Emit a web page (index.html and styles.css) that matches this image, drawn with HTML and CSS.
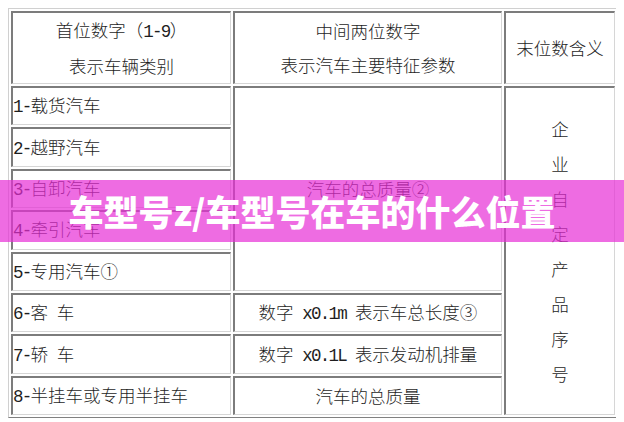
FILE: index.html
```html
<!DOCTYPE html>
<html lang="zh-CN">
<head>
<meta charset="utf-8">
<title>车型号</title>
<link rel="stylesheet" href="styles.css">
</head>
<body>
<table class="spec">
  <colgroup>
    <col class="w1"><col class="w2"><col class="w3">
  </colgroup>
  <tr class="head">
    <td>首位数字（<span class="m">1-9</span>）<br>表示车辆类别</td>
    <td>中间两位数字<br>表示汽车主要特征参数</td>
    <td>末位数含义</td>
  </tr>
  <tr class="r">
    <td class="type"><span class="m">1-</span>载货汽车</td>
    <td rowspan="5">汽车的总质量②</td>
    <td rowspan="8" class="vert">企<br>业<br>自<br>定<br>产<br>品<br>序<br>号</td>
  </tr>
  <tr class="r"><td class="type"><span class="m">2-</span>越野汽车</td></tr>
  <tr class="r"><td class="type"><span class="m">3-</span>自卸汽车</td></tr>
  <tr class="r"><td class="type"><span class="m">4-</span>牵引汽车</td></tr>
  <tr class="r"><td class="type"><span class="m">5-</span>专用汽车①</td></tr>
  <tr class="r">
    <td class="type"><span class="m">6-</span>客<span class="m"> </span>车</td>
    <td>数字<span class="m"> x0.1m </span>表示车总长度③</td>
  </tr>
  <tr class="r">
    <td class="type"><span class="m">7-</span>轿<span class="m"> </span>车</td>
    <td>数字<span class="m"> x0.1L </span>表示发动机排量</td>
  </tr>
  <tr class="r">
    <td class="type"><span class="m">8-</span>半挂车或专用半挂车</td>
    <td>汽车的总质量</td>
  </tr>
</table>
<div class="banner">车型号z/车型号在车的什么位置</div>
</body>
</html>
```
FILE: styles.css
```css
body {
  margin: 8px;
  background: #ffffff;
  color: #1e1e1e;
  font-family: "Noto Sans CJK SC", sans-serif;
}

.spec {
  border-collapse: separate;
  border-spacing: 2px;
  table-layout: fixed;
  width: 610px;
  border: 1px solid;
  border-color: #d0d0d0 #808080 #808080 #d0d0d0;
  font-size: 17.5px;
  font-weight: 300;
}

.w1 { width: 220px; }
.w2 { width: 269px; }
.w3 { width: 111px; }

.spec td {
  padding: 0;
  border-style: solid;
  border-width: 2px 1px 1px 2px;
  border-color: #7c7c7c #d6d6d6 #d6d6d6 #7c7c7c;
  vertical-align: middle;
  text-align: center;
  line-height: 24px;
  white-space: nowrap;
}

.head { height: 73px; }
.head td { line-height: 34px; }

.r { height: 39.4px; }

.spec td.type {
  text-align: left;
}

.spec td.vert {
  line-height: 35px;
}

.m {
  font-family: "Liberation Mono", monospace;
  font-weight: 400;
  letter-spacing: -1.75px;
}

.banner {
  position: absolute;
  left: 0;
  top: 180px;
  width: 624px;
  height: 62px;
  background: rgba(231, 45, 213, 0.7);
  color: #ffffff;
  font-family: "Noto Sans CJK SC", sans-serif;
  font-weight: 900;
  font-size: 35px;
  line-height: 62px;
  text-align: center;
}
```
